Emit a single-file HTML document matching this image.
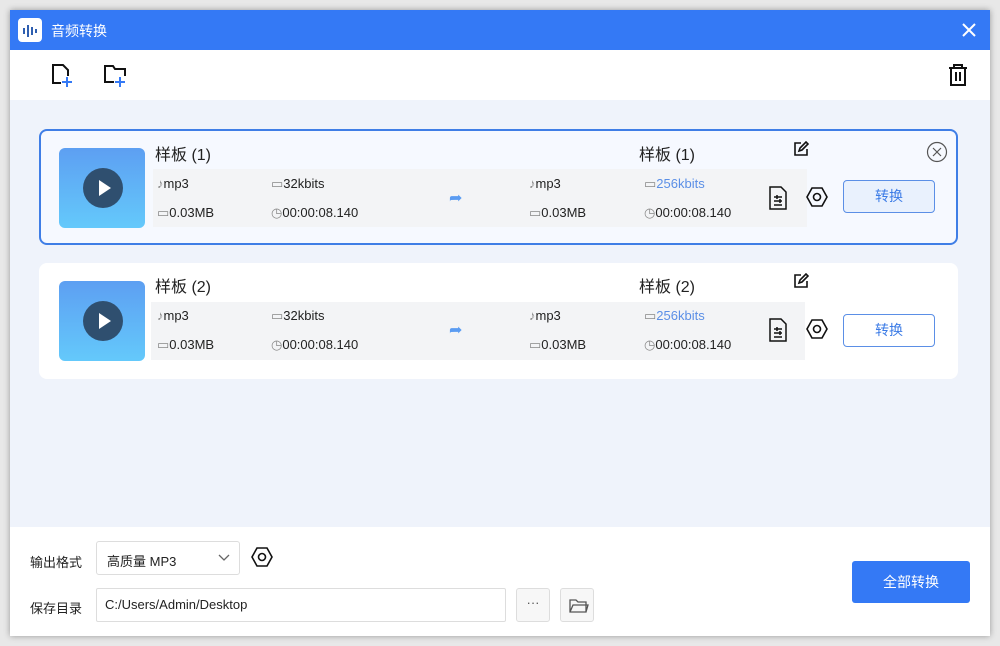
<!DOCTYPE html>
<html><head><meta charset="utf-8"><style>
*{margin:0;padding:0;box-sizing:border-box}
body{width:1000px;height:646px;background:#e8e8e8;font-family:"Liberation Sans","Noto Sans CJK SC",sans-serif;position:relative;overflow:hidden;color:#222}
.win{position:absolute;left:10px;top:10px;width:980px;height:626px;background:#fff;box-shadow:0 0 6px rgba(0,0,0,.35)}
.title{position:absolute;left:0;top:0;width:980px;height:40px;background:#3479f5;color:#fff;font-size:14px}
.a{position:absolute}
.content{position:absolute;left:0;top:90px;width:980px;height:427px;background:#eff3fb}
.card{position:absolute;left:29px;width:919px;height:116px;border-radius:8px;background:#fff}
.c1{top:29px;border:2px solid #3f7ee6;background:#f6f9ff}
.c2{top:163px}
.thumb{position:absolute;left:18px;top:17px;width:86px;height:80px;border-radius:6px;background:linear-gradient(#5d9ff2,#64c9fb)}
.c2 .thumb{left:20px;top:18px}
.play{position:absolute;left:24px;top:20px;width:40px;height:40px;border-radius:50%;background:#2f4f6f}
.strip{position:absolute;left:112px;top:38px;width:654px;height:58px;background:#f3f4f6}
.c2 .strip{left:112px;top:39px;width:654px}
.t{position:absolute;font-size:13px;white-space:nowrap}
.g{color:#888}
.nm{font-size:16px}
.btn{position:absolute;left:802px;width:92px;height:33px;border:1px solid #5b8fe6;border-radius:4px;background:#e9f1fd;color:#3b7be6;font-size:14px;text-align:center;line-height:31px}
.c2 .btn{background:#fff}
</style></head><body>
<div class="win">
<div class="title">
 <div class="a" style="left:8px;top:8px;width:24px;height:24px;background:#fff;border-radius:4px">
 <svg width="24" height="24"><g stroke="#2f5fb0" stroke-width="2"><path d="M6 10v6M10 7v12M14 9v8M18 11v4"/></g></svg></div>
 <div class="a" style="left:41px;top:11px">音频转换</div>
 <svg class="a" style="left:952px;top:13px" width="14" height="14"><path d="M1 1L13 13M13 1L1 13" stroke="#fff" stroke-width="2"/></svg>
</div>
<svg class="a" style="left:40px;top:53px" width="24" height="26" fill="none" stroke="#111" stroke-width="2"><path d="M11 20H3V2h10l5 5v6"/><path d="M17 14v10M12 19h10" stroke="#3479f5"/></svg>
<svg class="a" style="left:93px;top:54px" width="26" height="24" fill="none" stroke="#111" stroke-width="2"><path d="M11 18H2V2h8l2 3h10v7"/><path d="M17 13v10M12 18h10" stroke="#3479f5"/></svg>
<svg class="a" style="left:937px;top:53px" width="22" height="24" fill="none" stroke="#111" stroke-width="2"><path d="M2 5h18M7 5V2h8v3M4 5v17h14V5M9 9v9M13 9v9"/></svg>
<div class="content">
 <div class="card c1">
  <div class="thumb"><div class="play"><svg width="40" height="40"><path d="M16 12l12 8-12 8z" fill="#fff"/></svg></div></div>
  <div class="strip"></div>
  <div class="t nm" style="left:114px;top:10px">样板 (1)</div>
  <div class="t" style="left:116px;top:45px"><span class="g">♪</span>mp3</div>
  <div class="t" style="left:230px;top:45px"><span class="g">▭</span>32kbits</div>
  <div class="t" style="left:116px;top:74px"><span class="g">▭</span>0.03MB</div>
  <div class="t" style="left:230px;top:74px"><span class="g">◷</span>00:00:08.140</div>
  <div class="t" style="left:408px;top:57px;color:#5b9cf2;font-size:16px">➦</div>
  <div class="t nm" style="left:598px;top:10px">样板 (1)</div>
  <div class="t" style="left:488px;top:45px"><span class="g">♪</span>mp3</div>
  <div class="t" style="left:603px;top:45px;color:#5b8fe6"><span class="g">▭</span>256kbits</div>
  <div class="t" style="left:488px;top:74px"><span class="g">▭</span>0.03MB</div>
  <div class="t" style="left:603px;top:74px"><span class="g">◷</span>00:00:08.140</div>
  <svg class="a" style="left:752px;top:10px" width="16" height="16" fill="none" stroke="#111" stroke-width="1.6"><path d="M8 2H2v12h12V8M6 10l1-3 6-6 2 2-6 6z"/></svg>
  <svg class="a" style="left:885px;top:10px" width="22" height="22" fill="none" stroke="#555" stroke-width="1.2"><circle cx="11" cy="11" r="9.5"/><path d="M7 7l8 8M15 7l-8 8"/></svg>
  <svg class="a" style="left:727px;top:55px" width="20" height="24" fill="none" stroke="#111" stroke-width="1.5"><path d="M2 1h11l5 5v17H2z"/><path d="M6 11h8M6 15h8M6 19h8M9 9v4M12 13v4"/></svg>
  <svg class="a" style="left:765px;top:56px" width="22" height="20" fill="none" stroke="#111" stroke-width="1.6"><path d="M6 1h10l5 9-5 9H6l-5-9z"/><circle cx="11" cy="10" r="3.5"/></svg>
  <div class="btn" style="top:49px">转换</div>
 </div>
 <div class="card c2">
  <div class="thumb"><div class="play"><svg width="40" height="40"><path d="M16 12l12 8-12 8z" fill="#fff"/></svg></div></div>
  <div class="strip"></div>
  <div class="t nm" style="left:116px;top:10px">样板 (2)</div>
  <div class="t" style="left:118px;top:45px"><span class="g">♪</span>mp3</div>
  <div class="t" style="left:232px;top:45px"><span class="g">▭</span>32kbits</div>
  <div class="t" style="left:118px;top:74px"><span class="g">▭</span>0.03MB</div>
  <div class="t" style="left:232px;top:74px"><span class="g">◷</span>00:00:08.140</div>
  <div class="t" style="left:410px;top:57px;color:#5b9cf2;font-size:16px">➦</div>
  <div class="t nm" style="left:600px;top:10px">样板 (2)</div>
  <div class="t" style="left:490px;top:45px"><span class="g">♪</span>mp3</div>
  <div class="t" style="left:605px;top:45px;color:#5b8fe6"><span class="g">▭</span>256kbits</div>
  <div class="t" style="left:490px;top:74px"><span class="g">▭</span>0.03MB</div>
  <div class="t" style="left:605px;top:74px"><span class="g">◷</span>00:00:08.140</div>
  <svg class="a" style="left:754px;top:10px" width="16" height="16" fill="none" stroke="#111" stroke-width="1.6"><path d="M8 2H2v12h12V8M6 10l1-3 6-6 2 2-6 6z"/></svg>
  <svg class="a" style="left:729px;top:55px" width="20" height="24" fill="none" stroke="#111" stroke-width="1.5"><path d="M2 1h11l5 5v17H2z"/><path d="M6 11h8M6 15h8M6 19h8M9 9v4M12 13v4"/></svg>
  <svg class="a" style="left:767px;top:56px" width="22" height="20" fill="none" stroke="#111" stroke-width="1.6"><path d="M6 1h10l5 9-5 9H6l-5-9z"/><circle cx="11" cy="10" r="3.5"/></svg>
  <div class="btn" style="top:51px;left:804px">转换</div>
 </div>
</div>
<div class="t" style="left:20px;top:542px">输出格式</div>
<div class="a" style="left:86px;top:531px;width:144px;height:34px;border:1px solid #ddd;border-radius:3px;font-size:13px;padding:9px 10px">高质量 MP3<svg class="a" style="left:121px;top:12px" width="12" height="8" fill="none" stroke="#666" stroke-width="1.3"><path d="M1 1l5 5 5-5"/></svg></div>
<svg class="a" style="left:241px;top:537px" width="22" height="20" fill="none" stroke="#111" stroke-width="1.6"><path d="M6 1h10l5 9-5 9H6l-5-9z"/><circle cx="11" cy="10" r="3.5"/></svg>
<div class="t" style="left:20px;top:588px">保存目录</div>
<div class="a" style="left:86px;top:578px;width:410px;height:34px;border:1px solid #ddd;border-radius:2px;font-size:13px;padding:8px 8px">C:/Users/Admin/Desktop</div>
<div class="a" style="left:506px;top:578px;width:34px;height:34px;border:1px solid #ddd;border-radius:3px;background:#f7f7f7;text-align:center;line-height:28px;color:#555;font-size:13px">···</div>
<div class="a" style="left:550px;top:578px;width:34px;height:34px;border:1px solid #ddd;border-radius:3px;background:#f7f7f7"><svg width="34" height="34" fill="none" stroke="#555" stroke-width="1.3"><path d="M9 11h6l2 2h8v10H9zM9 23l3-7h15l-2 7"/></svg></div>
<div class="a" style="left:842px;top:551px;width:118px;height:42px;background:#3479f5;border-radius:3px;color:#fff;font-size:14px;text-align:center;line-height:42px">全部转换</div>
</div>
</body></html>
